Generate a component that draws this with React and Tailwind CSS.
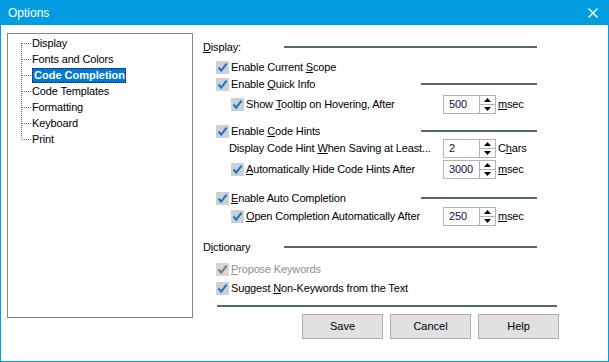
import React from "react";

const TREE = [
  "Display",
  "Fonts and Colors",
  "Code Completion",
  "Code Templates",
  "Formatting",
  "Keyboard",
  "Print",
];

function TreeConnector({ first, last }) {
  const y1 = first ? 8 : 0;
  const y2 = last ? 8 : 16;
  return (
    <svg width="11" height="16" className="shrink-0">
      <line x1="0.5" y1={y1} x2="0.5" y2={y2} stroke="#6d6d6d" strokeDasharray="1 1" />
      <line x1="1" y1="8.5" x2="10" y2="8.5" stroke="#6d6d6d" strokeDasharray="1 1" />
    </svg>
  );
}

function CheckBox({ checked = true, disabled = false }) {
  return (
    <span
      className={`flex h-[13px] w-[13px] shrink-0 items-center justify-center ${
        disabled ? "bg-[#d6d6d6]" : "bg-[#d0d0d0]"
      }`}
    >
      {checked && (
        <svg width="11" height="11" viewBox="0 0 11 11">
          <path
            d="M1.5 5.5 L4.2 8.6 L9.6 1.6"
            fill="none"
            stroke={disabled ? "#7a7a7a" : "#1577d0"}
            strokeWidth="2"
          />
        </svg>
      )}
    </span>
  );
}

function Spinner({ value }) {
  return (
    <div className="flex h-[19px] w-[53px] shrink-0 border border-[#b3b3b3] bg-white">
      <div className="flex flex-1 items-center pl-[5px] text-[#10104a]">{value}</div>
      <div className="flex w-[16px] flex-col border-l border-[#b3b3b3]">
        <div className="flex flex-1 items-center justify-center border-b border-[#b3b3b3]">
          <svg width="7" height="4">
            <path d="M0 4 L3.5 0 L7 4 Z" fill="#000" />
          </svg>
        </div>
        <div className="flex flex-1 items-center justify-center">
          <svg width="7" height="4">
            <path d="M0 0 L7 0 L3.5 4 Z" fill="#000" />
          </svg>
        </div>
      </div>
    </div>
  );
}

function Rule({ w }) {
  return <div className={`ml-auto h-[2px] bg-[#526873] ${w}`} />;
}

function Option({ sub, label, disabled, line, spin, unit, className }) {
  return (
    <div className={`flex w-[334px] items-center ${className}`}>
      <div className={`flex w-[240px] items-center gap-[2px] ${sub ? "pl-[28px]" : "pl-[13px]"}`}>
        <CheckBox disabled={disabled} />
        <span className={`whitespace-nowrap ${disabled ? "text-[#8f8f8f]" : ""}`}>{label}</span>
      </div>
      {spin && (
        <>
          <Spinner value={spin} />
          <span className="ml-[2px]">{unit}</span>
        </>
      )}
      {line && <Rule w="w-[128px]" />}
    </div>
  );
}

function Button({ children }) {
  return (
    <button className="flex h-[25px] w-[81px] items-center justify-center border border-[#adadad] bg-[#e1e1e1]">
      {children}
    </button>
  );
}

export default function App() {
  return (
    <div className="flex h-[362px] w-[609px] flex-col overflow-hidden border-x border-b border-[#019de0] bg-white font-['Liberation_Sans',Arial,sans-serif] text-[11px] tracking-[-0.15px] text-black">
      <div className="flex h-[25px] shrink-0 items-center justify-between bg-[#019de0] pl-[7px] pr-[10px] text-white">
        <span className="text-[12px] tracking-normal">Options</span>
        <svg width="10" height="10" viewBox="0 0 10 10">
          <path d="M0.5 0.5 L9.5 9.5 M9.5 0.5 L0.5 9.5" stroke="#fff" strokeWidth="1.4" />
        </svg>
      </div>

      <div className="flex flex-1">
        <div className="ml-[6px] mt-[8px] h-[285px] w-[186px] shrink-0 border border-[#828790] pl-[13px] pt-[1px]">
          {TREE.map((item, i) => (
            <div key={item} className="flex h-[16px] items-center">
              <TreeConnector first={i === 0} last={i === TREE.length - 1} />
              {item === "Code Completion" ? (
                <span className="flex h-[15px] items-center bg-[#0078d7] pl-[2px] pr-[1px] font-bold tracking-normal text-white outline-1 -outline-offset-1 outline-dotted outline-[#1b1b1b]">
                  {item}
                </span>
              ) : (
                <span className="whitespace-nowrap">{item}</span>
              )}
            </div>
          ))}
        </div>

        <div className="ml-[10px] flex flex-col">
          <div className="mt-[14px] flex h-[16px] w-[334px] items-center">
            <span>
              <u>D</u>isplay:
            </span>
            <Rule w="w-[253px]" />
          </div>
          <Option className="mt-[4px] h-[16px]" label={<>Enable Current <u>S</u>cope</>} />
          <Option className="mt-[1px] h-[16px]" label={<>Enable <u>Q</u>uick Info</>} line />
          <Option
            className="mt-[3px] h-[19px]"
            sub
            label={<>Show <u>T</u>ooltip on Hovering, After</>}
            spin="500"
            unit={<><u>m</u>sec</>}
          />

          <Option className="mt-[9px] h-[16px]" label={<>Enable <u>C</u>ode Hints</>} line />
          <div className="flex h-[18px] w-[334px] items-center">
            <span className="w-[240px] whitespace-nowrap pl-[26px]">
              Display Code Hint <u>W</u>hen Saving at Least...
            </span>
            <div className="flex h-[18px] items-center">
              <Spinner value="2" />
            </div>
            <span className="ml-[2px]">
              C<u>h</u>ars
            </span>
          </div>
          <Option
            className="mt-[3px] h-[19px]"
            sub
            label={<><u>A</u>utomatically Hide Code Hints After</>}
            spin="3000"
            unit={<><u>m</u>sec</>}
          />

          <Option className="mt-[11px] h-[16px]" label={<><u>E</u>nable Auto Completion</>} line />
          <Option
            className="mt-[1px] h-[19px]"
            sub
            label={<><u>O</u>pen Completion Automatically After</>}
            spin="250"
            unit={<><u>m</u>sec</>}
          />

          <div className="mt-[13px] flex h-[16px] w-[334px] items-center">
            <span>
              D<u>i</u>ctionary
            </span>
            <Rule w="w-[253px]" />
          </div>
          <Option className="mt-[6px] h-[16px]" disabled label={<><u>P</u>ropose Keywords</>} />
          <Option className="mt-[3px] h-[16px]" label={<>Suggest <u>N</u>on-Keywords from the Text</>} />

          <div className="ml-[14px] mt-[9px] h-[2px] w-[340px] bg-[#526873]" />

          <div className="ml-[99px] mt-[7px] flex gap-[7px] tracking-normal">
            <Button>Save</Button>
            <Button>Cancel</Button>
            <Button>Help</Button>
          </div>
        </div>
      </div>
    </div>
  );
}
